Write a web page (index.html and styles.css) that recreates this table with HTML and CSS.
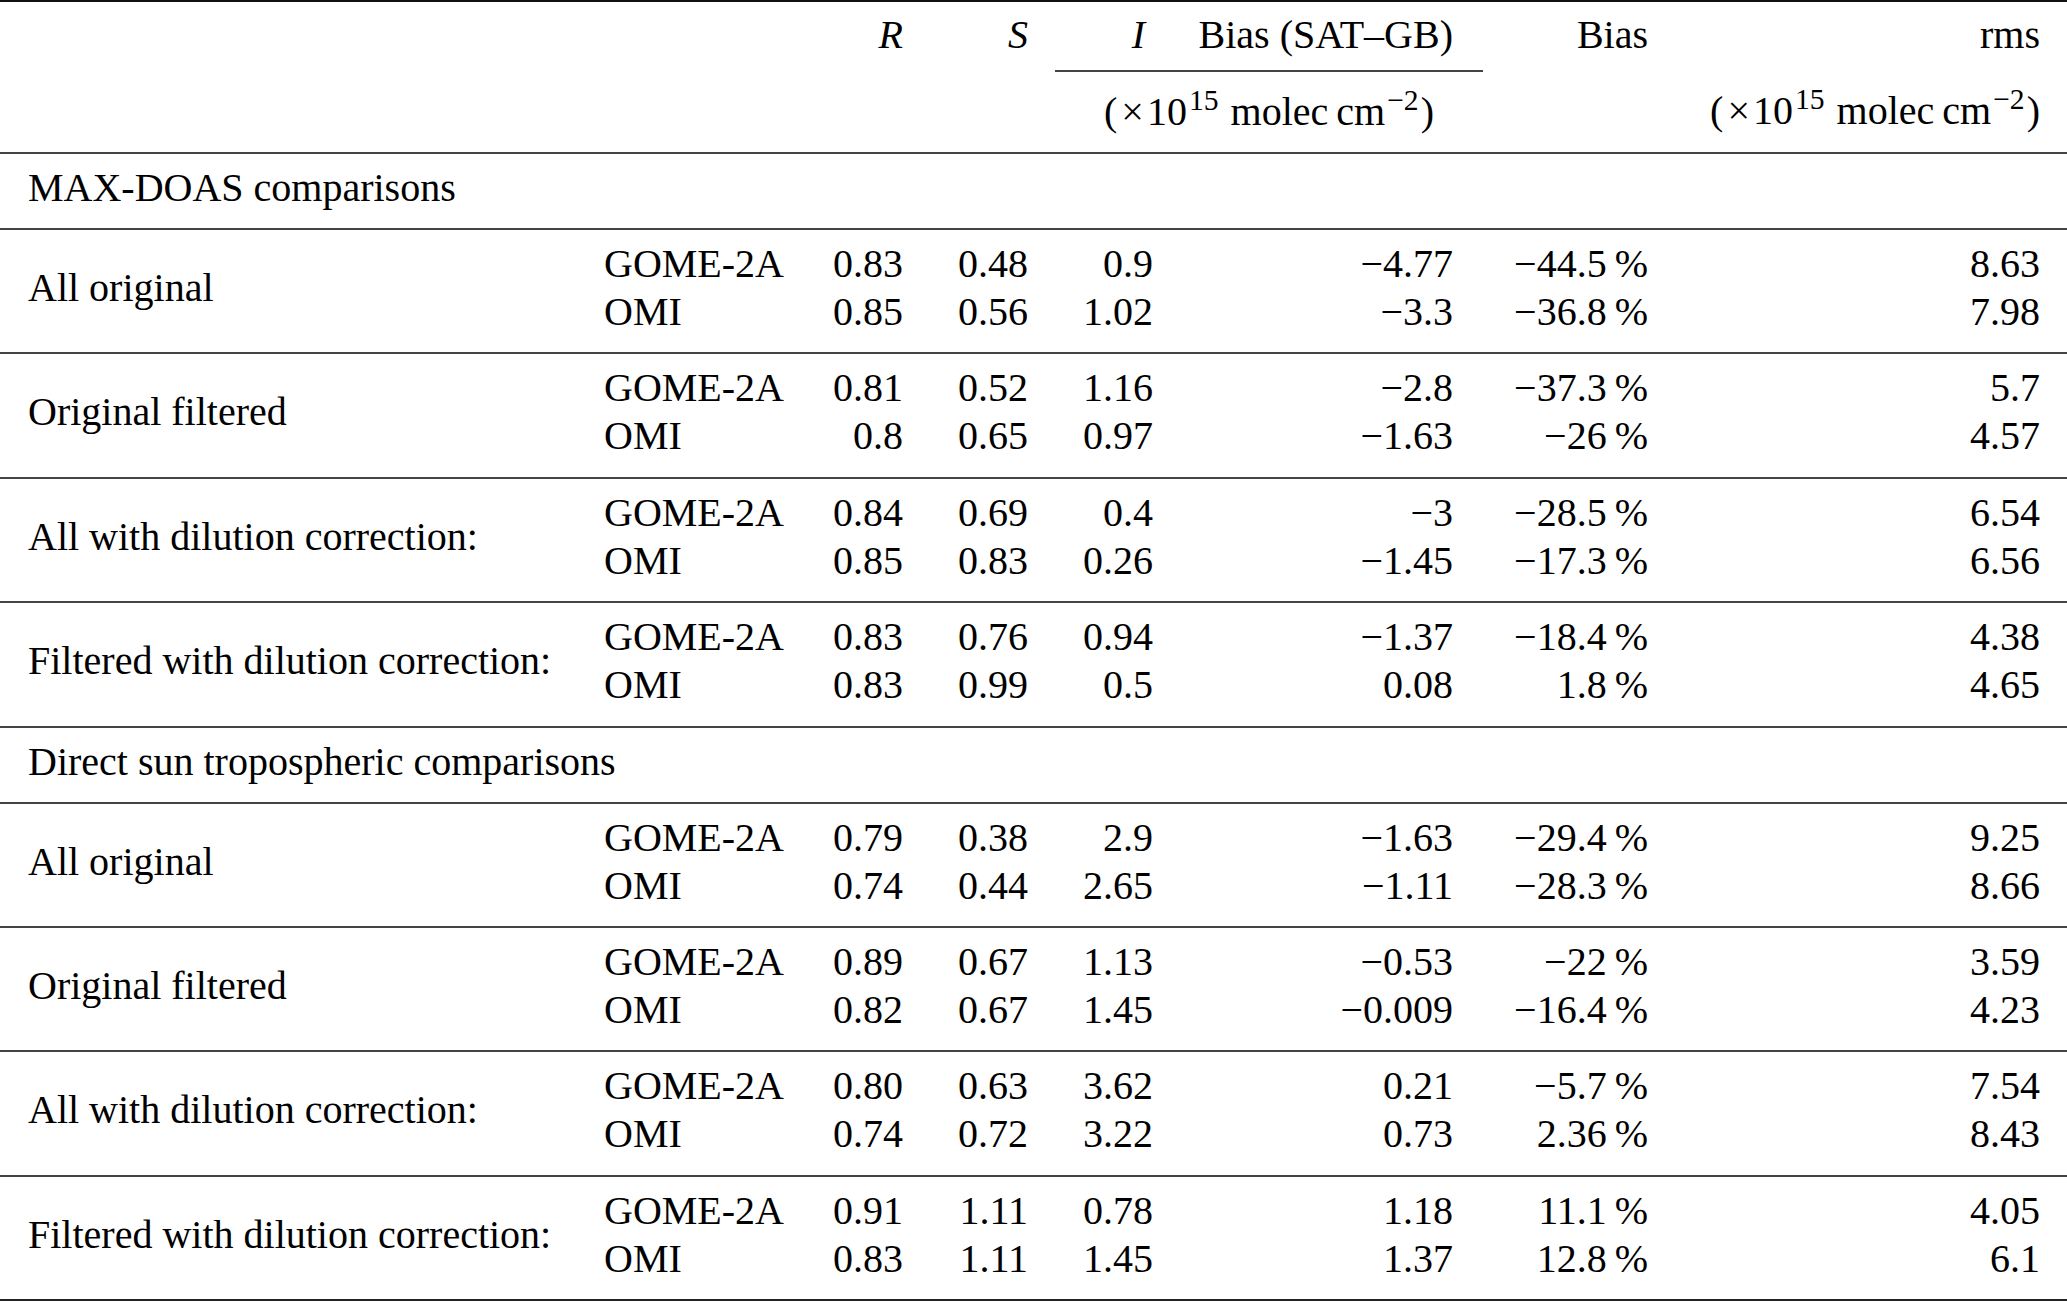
FILE: index.html
```html
<!DOCTYPE html>
<html lang="en">
<head>
<meta charset="utf-8">
<title>Comparison table</title>
<link rel="stylesheet" href="styles.css">
</head>
<body>
<table class="t">
  <colgroup>
    <col class="c-label"><col class="c-sat"><col class="c-r"><col class="c-s"><col class="c-i"><col class="c-bsg"><col class="c-bp"><col class="c-rms">
  </colgroup>
  <thead>
    <tr class="h1">
      <th></th><th></th>
      <th class="num"><i>R</i></th>
      <th class="num"><i>S</i></th>
      <th class="num ul ih"><i>I</i></th>
      <th class="num ul">Bias (SAT–GB)</th>
      <th class="num">Bias</th>
      <th class="num">rms</th>
    </tr>
    <tr class="h2">
      <th></th><th></th><th></th><th></th>
      <th colspan="2" class="ctr">(<span class="times">×</span>10<sup>15</sup> molec&#8201;cm<sup>−2</sup>)</th>
      <th></th>
      <th class="num">(<span class="times">×</span>10<sup>15</sup> molec&#8201;cm<sup>−2</sup>)</th>
    </tr>
  </thead>
  <tbody class="sec"><tr><td colspan="8" class="sec-title">MAX-DOAS comparisons</td></tr></tbody>
  <tbody class="grp">
    <tr class="r1"><td rowspan="2" class="label">All original</td><td class="sat">GOME-2A</td><td class="num">0.83</td><td class="num">0.48</td><td class="num">0.9</td><td class="num">−4.77</td><td class="num">−44.5&#8201;%</td><td class="num">8.63</td></tr>
    <tr class="r2"><td class="sat">OMI</td><td class="num">0.85</td><td class="num">0.56</td><td class="num">1.02</td><td class="num">−3.3</td><td class="num">−36.8&#8201;%</td><td class="num">7.98</td></tr>
  </tbody>
  <tbody class="grp">
    <tr class="r1"><td rowspan="2" class="label">Original filtered</td><td class="sat">GOME-2A</td><td class="num">0.81</td><td class="num">0.52</td><td class="num">1.16</td><td class="num">−2.8</td><td class="num">−37.3&#8201;%</td><td class="num">5.7</td></tr>
    <tr class="r2"><td class="sat">OMI</td><td class="num">0.8</td><td class="num">0.65</td><td class="num">0.97</td><td class="num">−1.63</td><td class="num">−26&#8201;%</td><td class="num">4.57</td></tr>
  </tbody>
  <tbody class="grp">
    <tr class="r1"><td rowspan="2" class="label">All with dilution correction:</td><td class="sat">GOME-2A</td><td class="num">0.84</td><td class="num">0.69</td><td class="num">0.4</td><td class="num">−3</td><td class="num">−28.5&#8201;%</td><td class="num">6.54</td></tr>
    <tr class="r2"><td class="sat">OMI</td><td class="num">0.85</td><td class="num">0.83</td><td class="num">0.26</td><td class="num">−1.45</td><td class="num">−17.3&#8201;%</td><td class="num">6.56</td></tr>
  </tbody>
  <tbody class="grp">
    <tr class="r1"><td rowspan="2" class="label">Filtered with dilution correction:</td><td class="sat">GOME-2A</td><td class="num">0.83</td><td class="num">0.76</td><td class="num">0.94</td><td class="num">−1.37</td><td class="num">−18.4&#8201;%</td><td class="num">4.38</td></tr>
    <tr class="r2"><td class="sat">OMI</td><td class="num">0.83</td><td class="num">0.99</td><td class="num">0.5</td><td class="num">0.08</td><td class="num">1.8&#8201;%</td><td class="num">4.65</td></tr>
  </tbody>
  <tbody class="sec"><tr><td colspan="8" class="sec-title">Direct sun tropospheric comparisons</td></tr></tbody>
  <tbody class="grp">
    <tr class="r1"><td rowspan="2" class="label">All original</td><td class="sat">GOME-2A</td><td class="num">0.79</td><td class="num">0.38</td><td class="num">2.9</td><td class="num">−1.63</td><td class="num">−29.4&#8201;%</td><td class="num">9.25</td></tr>
    <tr class="r2"><td class="sat">OMI</td><td class="num">0.74</td><td class="num">0.44</td><td class="num">2.65</td><td class="num">−1.11</td><td class="num">−28.3&#8201;%</td><td class="num">8.66</td></tr>
  </tbody>
  <tbody class="grp">
    <tr class="r1"><td rowspan="2" class="label">Original filtered</td><td class="sat">GOME-2A</td><td class="num">0.89</td><td class="num">0.67</td><td class="num">1.13</td><td class="num">−0.53</td><td class="num">−22&#8201;%</td><td class="num">3.59</td></tr>
    <tr class="r2"><td class="sat">OMI</td><td class="num">0.82</td><td class="num">0.67</td><td class="num">1.45</td><td class="num">−0.009</td><td class="num">−16.4&#8201;%</td><td class="num">4.23</td></tr>
  </tbody>
  <tbody class="grp">
    <tr class="r1"><td rowspan="2" class="label">All with dilution correction:</td><td class="sat">GOME-2A</td><td class="num">0.80</td><td class="num">0.63</td><td class="num">3.62</td><td class="num">0.21</td><td class="num">−5.7&#8201;%</td><td class="num">7.54</td></tr>
    <tr class="r2"><td class="sat">OMI</td><td class="num">0.74</td><td class="num">0.72</td><td class="num">3.22</td><td class="num">0.73</td><td class="num">2.36&#8201;%</td><td class="num">8.43</td></tr>
  </tbody>
  <tbody class="grp last">
    <tr class="r1"><td rowspan="2" class="label">Filtered with dilution correction:</td><td class="sat">GOME-2A</td><td class="num">0.91</td><td class="num">1.11</td><td class="num">0.78</td><td class="num">1.18</td><td class="num">11.1&#8201;%</td><td class="num">4.05</td></tr>
    <tr class="r2"><td class="sat">OMI</td><td class="num">0.83</td><td class="num">1.11</td><td class="num">1.45</td><td class="num">1.37</td><td class="num">12.8&#8201;%</td><td class="num">6.1</td></tr>
  </tbody>
</table>
</body>
</html>
```

FILE: styles.css
```css
html, body {
  margin: 0;
  padding: 0;
  background: #ffffff;
}

body {
  font-family: "Liberation Serif", "Times New Roman", serif;
  font-size: 40px;
  color: #000000;
}

.t {
  width: 2067px;
  table-layout: fixed;
  border-collapse: collapse;
  border-spacing: 0;
  border-top: 2px solid #111111;
  border-bottom: 2px solid #222222;
}

.c-label { width: 580px; }
.c-sat { width: 220px; }
.c-r { width: 130px; }
.c-s { width: 125px; }
.c-i { width: 125px; }
.c-bsg { width: 303px; }
.c-bp { width: 192px; }
.c-rms { width: 392px; }

th, td {
  padding: 0;
  font-weight: normal;
  line-height: 48px;
  white-space: nowrap;
  vertical-align: top;
}

.num {
  text-align: right;
  padding-right: 27px;
}

.ctr {
  text-align: center;
}

.times {
  margin: 0 3px 0 4px;
}

sup {
  font-size: 0.74em;
  line-height: 0;
  vertical-align: 0.5em;
  margin: 0 2px 0 2px;
}

/* header */
.h1 th {
  padding-top: 9px;
  padding-bottom: 11px;
}

.h1 th.ul {
  border-bottom: 2px solid #444444;
}

.h1 th.ih {
  padding-right: 35px;
}

.h1 th.num:nth-child(6) {
  padding-right: 30px;
}

.h2 th {
  padding-top: 16px;
  padding-bottom: 16px;
}

/* section titles */
.sec {
  border-top: 2px solid #444444;
}

.sec-title {
  text-align: left;
  padding: 10px 0 16px 28px;
}

/* groups */
.grp {
  border-top: 2px solid #444444;
}

.grp .r1 td {
  padding-top: 10px;
}

.grp .r2 td {
  padding-bottom: 16.4px;
}

.grp td.label {
  padding: 10px 0 16.4px 28px;
  vertical-align: middle;
}

.grp td.sat {
  padding-left: 24px;
}

.grp td.num:nth-last-child(3) {
  padding-right: 30px;
}
```
